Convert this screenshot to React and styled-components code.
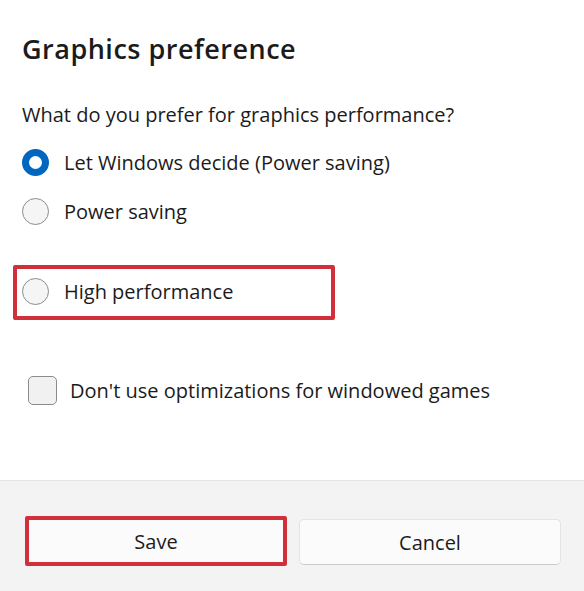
import React from 'react';
import styled, { createGlobalStyle } from 'styled-components';

const GlobalStyle = createGlobalStyle`
	html, body {
		margin: 0;
		padding: 0;
		background: #ffffff;
	}

	body {
		font-family: "Open Sans", "Noto Sans", sans-serif;
		color: #1b1b1b;
	}

	* {
		box-sizing: border-box;
	}
`;

const Dialog = styled.div`
	width: 584px;
	height: 591px;
	display: flex;
	flex-direction: column;
	background: #ffffff;
`;

const Content = styled.div`
	height: 480px;
	padding: 0 22px;
	display: flex;
	flex-direction: column;
	align-items: flex-start;
`;

const Title = styled.h2`
	margin: 32px 0 0;
	font-size: 27px;
	line-height: 33px;
	font-weight: 600;
	letter-spacing: 0.5px;
`;

const Question = styled.p`
	margin: 36px 0 0;
	font-size: 20px;
	line-height: 28px;
	font-weight: 400;
`;

const Options = styled.div`
	margin-top: 9px;
	display: flex;
	flex-direction: column;
`;

const Option = styled.label`
	height: 49px;
	display: flex;
	align-items: center;
	gap: 15px;
	font-size: 20px;
`;

const Radio = styled.span`
	width: 27px;
	height: 27px;
	border-radius: 50%;
	flex-shrink: 0;
	background: ${(p) => (p.checked ? '#ffffff' : '#f5f5f5')};
	border: ${(p) => (p.checked ? '7px solid #0067c0' : '1px solid #8b8b8b')};
`;

const Highlight = styled.div`
	margin: 29px 0 0 -9px;
	width: 322px;
	height: 55px;
	border: 4px solid #d1303a;
	border-radius: 2px;
	padding: 0 0 3px 5px;
	display: flex;
	align-items: center;
`;

const CheckRow = styled.label`
	margin: 50px 0 0 6px;
	height: 40px;
	display: flex;
	align-items: center;
	gap: 13px;
	font-size: 20px;
`;

const Checkbox = styled.span`
	width: 29px;
	height: 29px;
	border-radius: 5px;
	border: 1px solid #8b8b8b;
	background: #f1f1f1;
	flex-shrink: 0;
`;

const Footer = styled.div`
	flex: 1;
	background: #f3f3f3;
	border-top: 1px solid #e4e4e4;
	padding: 38px 23px 0 25px;
	display: grid;
	grid-template-columns: 1fr 1fr;
	align-items: start;
	gap: 12px;
`;

const Button = styled.button`
	height: ${(p) => (p.highlighted ? '50px' : '46px')};
	margin-top: ${(p) => (p.highlighted ? '-3px' : '0')};
	background: #fbfbfb;
	border: ${(p) => (p.highlighted ? '4px solid #d1303a' : '1px solid #e3e3e3')};
	border-bottom-color: ${(p) => (p.highlighted ? '#d1303a' : '#cccccc')};
	border-radius: ${(p) => (p.highlighted ? '2px' : '5px')};
	font-family: "Open Sans", "Noto Sans", sans-serif;
	font-size: 20px;
	color: #1b1b1b;
	padding: 0;
	display: flex;
	align-items: center;
	justify-content: center;
`;

const App = () => {
	return (
		<Dialog>
			<GlobalStyle />
			<Content>
				<Title>Graphics preference</Title>
				<Question>What do you prefer for graphics performance?</Question>
				<Options>
					<Option>
						<Radio checked />
						Let Windows decide (Power saving)
					</Option>
					<Option>
						<Radio />
						Power saving
					</Option>
				</Options>
				<Highlight>
					<Option>
						<Radio />
						High performance
					</Option>
				</Highlight>
				<CheckRow>
					<Checkbox />
					Don't use optimizations for windowed games
				</CheckRow>
			</Content>
			<Footer>
				<Button highlighted>Save</Button>
				<Button>Cancel</Button>
			</Footer>
		</Dialog>
	);
};

export default App;
